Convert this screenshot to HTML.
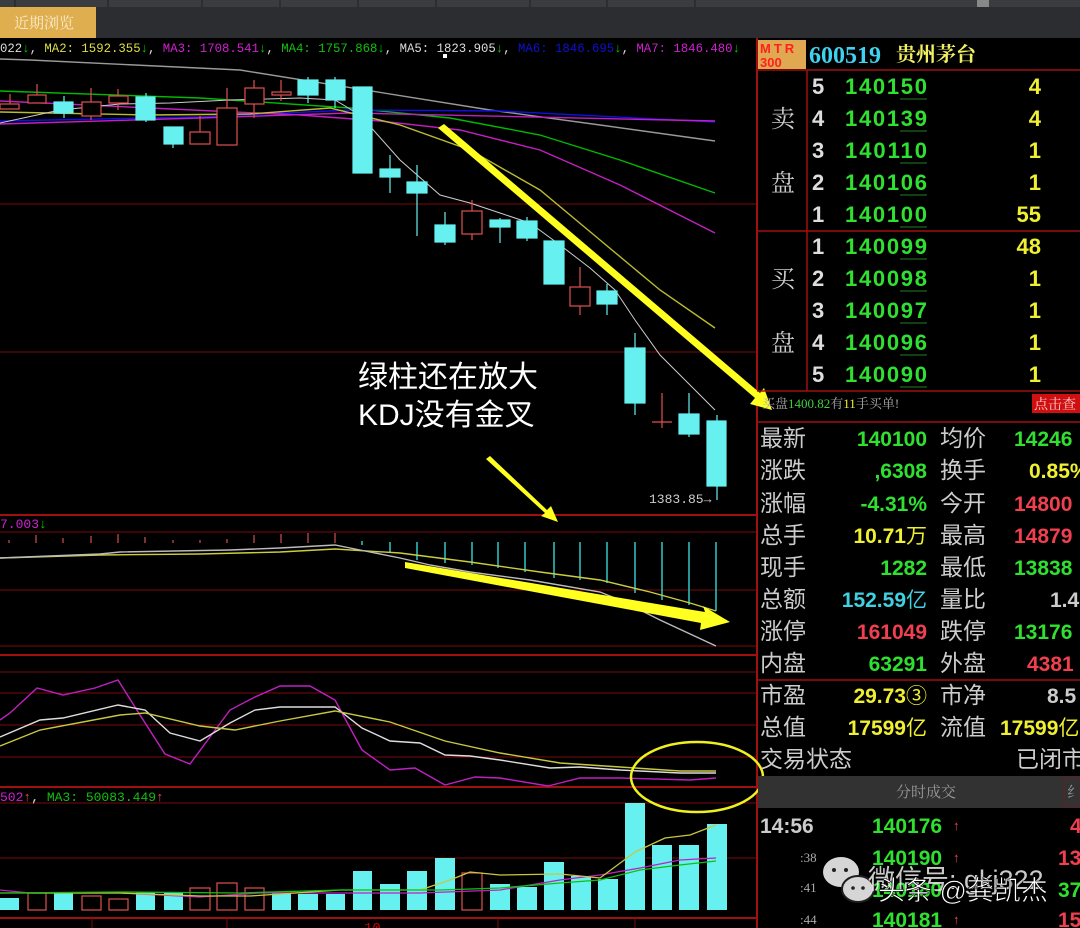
<!DOCTYPE html>
<html><head><meta charset="utf-8"><style>
html,body{margin:0;padding:0;background:#000;width:1080px;height:928px;overflow:hidden}
svg{display:block}
.c{font-family:"Liberation Sans","Noto Sans CJK SC",sans-serif}
.m{font-family:"Liberation Mono","Noto Sans CJK SC",monospace}
.s{font-family:"Liberation Serif","Noto Serif CJK SC",serif}
</style></head><body>
<svg width="1080" height="928" viewBox="0 0 1080 928" xmlns="http://www.w3.org/2000/svg">
<rect width="1080" height="928" fill="#000"/>
<rect x="0" y="0" width="1080" height="7" fill="#3a3c40"/>
<g stroke="#1e1f22" stroke-width="1"><line x1="15" y1="0" x2="15" y2="7"/><line x1="108" y1="0" x2="108" y2="7"/><line x1="202" y1="0" x2="202" y2="7"/><line x1="280" y1="0" x2="280" y2="7"/><line x1="358" y1="0" x2="358" y2="7"/><line x1="436" y1="0" x2="436" y2="7"/><line x1="530" y1="0" x2="530" y2="7"/><line x1="607" y1="0" x2="607" y2="7"/><line x1="695" y1="0" x2="695" y2="7"/></g>
<rect x="0" y="7" width="1080" height="31" fill="#2c2d30"/>
<rect x="0" y="7" width="96" height="31" fill="#dfae4e"/>
<text x="14" y="28" class="s" font-size="15" fill="#fbeccb">近期浏览</text>
<rect x="977" y="0" width="12" height="7" fill="#888"/>

<g stroke="#7a0a0a" stroke-width="1">
<line x1="0" y1="204" x2="757" y2="204"/><line x1="0" y1="352" x2="757" y2="352"/>
<line x1="0" y1="532" x2="757" y2="532"/><line x1="0" y1="590" x2="757" y2="590"/><line x1="0" y1="646" x2="757" y2="646"/>
<line x1="0" y1="672" x2="757" y2="672"/><line x1="0" y1="693" x2="757" y2="693"/><line x1="0" y1="725" x2="757" y2="725"/><line x1="0" y1="757" x2="757" y2="757"/>
<line x1="0" y1="803" x2="757" y2="803"/><line x1="0" y1="858" x2="757" y2="858"/>
</g>
<g stroke="#a01010" stroke-width="2">
<line x1="0" y1="515" x2="757" y2="515"/><line x1="0" y1="655" x2="757" y2="655"/><line x1="0" y1="787" x2="757" y2="787"/><line x1="0" y1="918" x2="757" y2="918"/>
<line x1="757" y1="38" x2="757" y2="928"/>
</g>
<g stroke="#7a0a0a"><line x1="92" y1="918" x2="92" y2="928"/><line x1="227" y1="918" x2="227" y2="928"/><line x1="498" y1="918" x2="498" y2="928"/><line x1="635" y1="918" x2="635" y2="928"/></g>
<text x="364" y="932" class="m" font-size="14" fill="#c00">10</text>

<text x="0" y="52" class="m" font-size="13" textLength="740" lengthAdjust="spacingAndGlyphs">
<tspan fill="#ddd">022</tspan><tspan fill="#0c0">↓</tspan><tspan fill="#ddd">, </tspan><tspan fill="#dddd44">MA2: 1592.355</tspan><tspan fill="#0c0">↓</tspan><tspan fill="#ddd">, </tspan><tspan fill="#d020d0">MA3: 1708.541</tspan><tspan fill="#0c0">↓</tspan><tspan fill="#ddd">, </tspan><tspan fill="#10c010">MA4: 1757.868</tspan><tspan fill="#0c0">↓</tspan><tspan fill="#ddd">, MA5: 1823.905</tspan><tspan fill="#0c0">↓</tspan><tspan fill="#ddd">, </tspan><tspan fill="#1010d0">MA6: 1846.695</tspan><tspan fill="#0c0">↓</tspan><tspan fill="#ddd">, </tspan><tspan fill="#d020d0">MA7: 1846.480</tspan><tspan fill="#0c0">↓</tspan>
</text>

<g fill="none" stroke-width="1.4">
<polyline stroke="#999" points="0,59 30,60 240,70 490,110 600,125 715,141"/>
<polyline stroke="#0b0" points="0,91 200,98 350,108 450,118 540,135 620,160 715,193"/>
<polyline stroke="#1010e0" points="0,121 200,117 350,110 500,111 715,122"/>
<polyline stroke="#c020c0" points="0,124 200,118 350,113 715,121"/>
<polyline stroke="#c020c0" points="0,101 150,108 300,115 380,121 460,130 540,150 620,185 715,233"/>
<polyline stroke="#bbbb30" points="0,112 150,115 250,114 330,108 400,125 470,150 540,190 600,240 660,290 715,328"/>
<polyline stroke="#ccc" stroke-width="1" points="0,123 60,110 120,104 170,103 230,100 300,98 335,100 360,115 400,160 440,195 470,203 500,213 530,223 560,245 590,268 615,290 635,320 660,355 700,395 715,410"/>
</g>

<g stroke-width="1.2">
<g stroke="#e05050" fill="#000">
<line x1="10" y1="94" x2="10" y2="104"/><rect x="0" y="104" width="19" height="5"/>
<line x1="37" y1="84" x2="37" y2="95"/><rect x="28" y="95" width="18" height="8"/>
<line x1="91" y1="88" x2="91" y2="102"/><line x1="91" y1="116" x2="91" y2="120"/><rect x="82" y="102" width="19" height="14"/>
<line x1="118" y1="89" x2="118" y2="110"/><rect x="109" y="96" width="19" height="7"/>
<line x1="200" y1="116" x2="200" y2="132"/><rect x="190" y="132" width="20" height="12"/>
<line x1="227" y1="88" x2="227" y2="108"/><rect x="217" y="108" width="20" height="37"/>
<line x1="254" y1="80" x2="254" y2="118"/><rect x="245" y="88" width="19" height="16"/>
<line x1="281" y1="80" x2="281" y2="101"/><rect x="272" y="92" width="19" height="3"/>
<line x1="472" y1="200" x2="472" y2="240"/><rect x="462" y="211" width="20" height="23"/>
<line x1="580" y1="267" x2="580" y2="315"/><rect x="570" y="287" width="20" height="19"/>
<line x1="662" y1="393" x2="662" y2="428"/><line x1="652" y1="422" x2="672" y2="422"/>
</g>
<g stroke="#66f0f0" fill="#66f0f0">
<line x1="64" y1="96" x2="64" y2="118"/><rect x="54" y="102" width="19" height="11"/>
<line x1="146" y1="93" x2="146" y2="122"/><rect x="136" y="97" width="19" height="23"/>
<line x1="173" y1="127" x2="173" y2="148"/><rect x="164" y="127" width="19" height="17"/>
<line x1="308" y1="77" x2="308" y2="103"/><rect x="298" y="80" width="20" height="15"/>
<line x1="335" y1="77" x2="335" y2="108"/><rect x="326" y="80" width="19" height="20"/>
<rect x="353" y="87" width="19" height="86"/>
<line x1="390" y1="155" x2="390" y2="193"/><rect x="380" y="169" width="20" height="8"/>
<line x1="417" y1="165" x2="417" y2="236"/><rect x="407" y="182" width="20" height="11"/>
<line x1="445" y1="212" x2="445" y2="245"/><rect x="435" y="225" width="20" height="17"/>
<line x1="500" y1="218" x2="500" y2="243"/><rect x="490" y="220" width="20" height="7"/>
<line x1="527" y1="217" x2="527" y2="241"/><rect x="517" y="221" width="20" height="17"/>
<rect x="544" y="241" width="20" height="43"/>
<line x1="607" y1="284" x2="607" y2="315"/><rect x="597" y="291" width="20" height="13"/>
<line x1="635" y1="333" x2="635" y2="415"/><rect x="625" y="348" width="20" height="55"/>
<line x1="689" y1="393" x2="689" y2="437"/><rect x="679" y="414" width="20" height="20"/>
<line x1="717" y1="415" x2="717" y2="500"/><rect x="707" y="421" width="19" height="65"/>
</g>
</g>
<text x="649" y="503" class="m" font-size="13" fill="#ccc">1383.85→</text>
<rect x="443" y="54" width="4" height="4" fill="#fff"/>

<text x="358" y="387" class="c" font-size="30" fill="#fff">绿柱还在放大</text>
<text x="358" y="425" class="c" font-size="30" fill="#fff">KDJ没有金叉</text>

<text x="0" y="528" class="m" font-size="13" fill="#d020d0">7.003<tspan fill="#0c0">↓</tspan></text>
<g stroke="#d05050" stroke-width="1.2">
<line x1="9" y1="540" x2="9" y2="543"/><line x1="36" y1="535" x2="36" y2="543"/><line x1="63" y1="538" x2="63" y2="543"/><line x1="91" y1="536" x2="91" y2="543"/><line x1="118" y1="534" x2="118" y2="543"/><line x1="145" y1="537" x2="145" y2="543"/><line x1="173" y1="540" x2="173" y2="543"/><line x1="200" y1="540" x2="200" y2="543"/><line x1="227" y1="539" x2="227" y2="543"/><line x1="254" y1="535" x2="254" y2="543"/><line x1="281" y1="534" x2="281" y2="543"/><line x1="308" y1="533" x2="308" y2="543"/><line x1="335" y1="533" x2="335" y2="543"/>
</g>
<g stroke="#30c8c8" stroke-width="1.5">
<line x1="362" y1="541" x2="362" y2="545"/><line x1="390" y1="542" x2="390" y2="553"/><line x1="417" y1="542" x2="417" y2="560"/><line x1="445" y1="542" x2="445" y2="563"/><line x1="472" y1="542" x2="472" y2="565"/><line x1="498" y1="542" x2="498" y2="568"/><line x1="525" y1="542" x2="525" y2="572"/><line x1="554" y1="542" x2="554" y2="578"/><line x1="580" y1="542" x2="580" y2="580"/><line x1="607" y1="542" x2="607" y2="583"/><line x1="635" y1="542" x2="635" y2="593"/><line x1="662" y1="542" x2="662" y2="600"/><line x1="689" y1="542" x2="689" y2="605"/><line x1="716" y1="542" x2="716" y2="611"/>
</g>
<g fill="none" stroke-width="1.4">
<polyline stroke="#cccc40" points="0,558 100,555 200,554 280,552 335,549 400,553 470,562 540,572 600,580 650,592 690,603 716,611"/>
<polyline stroke="#bbb" points="0,558 100,554 120,552 230,550 280,548 335,545 360,550 400,558 430,565 470,572 530,580 600,592 620,600 660,620 716,646"/>
</g>
<polygon fill="#ffff20" points="405,562 705,612 703,606 730,622 700,630 701,623 405,568"/>

<g fill="none" stroke-width="1.4">
<polyline stroke="#c020c0" points="0,720 10,713 37,688 63,695 95,688 118,680 140,715 165,754 190,764 230,710 255,697 280,686 310,686 335,700 362,750 390,770 415,768 445,785 475,777 500,778 548,786 560,783 580,778 620,778 690,780 716,778"/>
<polyline stroke="#ddd" points="0,737 40,720 63,718 118,705 145,710 170,733 200,741 230,723 255,710 280,707 300,707 335,707 362,728 390,741 420,743 445,755 470,756 500,760 550,768 580,767 620,770 680,773 716,773"/>
<polyline stroke="#c8c840" points="0,746 40,730 120,715 145,713 200,726 235,730 280,721 335,711 390,722 445,741 500,753 560,763 620,767 680,771 716,771"/>
</g>
<ellipse cx="697" cy="777" rx="66" ry="35" fill="none" stroke="#f0f020" stroke-width="2.5"/>

<text x="0" y="801" class="m" font-size="13"><tspan fill="#d020d0">502</tspan><tspan fill="#e05050">↑</tspan><tspan fill="#ddd">, </tspan><tspan fill="#10c010">MA3: 50083.449</tspan><tspan fill="#e05050">↑</tspan></text>
<g fill="#66f0f0">
<rect x="0" y="898" width="19" height="12"/><rect x="54" y="893" width="19" height="17"/><rect x="136" y="892" width="19" height="18"/><rect x="164" y="893" width="19" height="17"/><rect x="272" y="893" width="19" height="17"/><rect x="298" y="894" width="20" height="16"/><rect x="326" y="894" width="19" height="16"/><rect x="353" y="871" width="19" height="39"/><rect x="380" y="884" width="20" height="26"/><rect x="407" y="871" width="20" height="39"/><rect x="435" y="858" width="20" height="52"/><rect x="490" y="884" width="20" height="26"/><rect x="517" y="887" width="20" height="23"/><rect x="544" y="862" width="20" height="48"/><rect x="571" y="876" width="20" height="34"/><rect x="598" y="879" width="20" height="31"/><rect x="625" y="803" width="20" height="107"/><rect x="652" y="845" width="20" height="65"/><rect x="679" y="845" width="20" height="65"/><rect x="707" y="824" width="20" height="86"/>
</g>
<g fill="#000" stroke="#e05050" stroke-width="1.2">
<rect x="28" y="893" width="18" height="17"/><rect x="82" y="896" width="19" height="14"/><rect x="109" y="899" width="19" height="11"/><rect x="190" y="888" width="20" height="22"/><rect x="217" y="883" width="20" height="27"/><rect x="245" y="888" width="19" height="22"/><rect x="462" y="873" width="20" height="37"/>
</g>
<g fill="none" stroke-width="1.3">
<polyline stroke="#c020c0" points="0,890 30,893 120,893 200,897 260,893 340,893 420,893 500,890 560,880 600,875 640,868 680,860 716,858"/>
<polyline stroke="#c8c840" points="0,893 120,893 200,896 250,896 340,890 420,890 450,880 470,872 500,875 560,874 600,878 635,852 665,838 690,835 716,825"/>
<polyline stroke="#10c010" points="0,893 120,892 240,893 340,890 440,890 500,888 560,883 600,880 640,870 680,865 716,861"/>
</g>

<polygon fill="#ffff20" points="438,128 444,124 760,393 764,388 772,410 750,404 755,398"/>
<polygon fill="#ffff20" points="486,459 490,456 547,510 551,506 558,522 541,516 545,513"/>

<g stroke="#a01010" stroke-width="1.5">
<line x1="757" y1="70" x2="1080" y2="70"/><line x1="757" y1="231" x2="1080" y2="231"/><line x1="757" y1="391" x2="1080" y2="391"/><line x1="757" y1="422" x2="1080" y2="422"/><line x1="757" y1="680" x2="1080" y2="680"/>
<line x1="807" y1="70" x2="807" y2="391"/>
</g>
<rect x="758" y="40" width="48" height="29" fill="#e0a850"/>
<text x="760" y="53" class="c" font-size="13" font-weight="bold" fill="#ff2020" letter-spacing="3">MTR</text>
<text x="760" y="67" class="c" font-size="13" font-weight="bold" fill="#ff2020">300</text>
<text x="809" y="63" class="s" font-size="24" font-weight="bold" fill="#40d0f0">600519</text>
<text x="896" y="61" class="s" font-size="20" font-weight="bold" fill="#f0f060">贵州茅台</text>

<g class="s" font-size="24" fill="#ccc">
<text x="771" y="127">卖</text><text x="771" y="191">盘</text>
<text x="771" y="287">买</text><text x="771" y="351">盘</text>
</g>
<g class="c" font-size="22" font-weight="bold">
<g fill="#ddd">
<text x="812" y="94">5</text><text x="812" y="126">4</text><text x="812" y="158">3</text><text x="812" y="190">2</text><text x="812" y="222">1</text>
<text x="812" y="254">1</text><text x="812" y="286">2</text><text x="812" y="318">3</text><text x="812" y="350">4</text><text x="812" y="382">5</text>
</g>
<g fill="#30e030">
<text x="845" y="94" textLength="82">140150</text><text x="845" y="126" textLength="82">140139</text><text x="845" y="158" textLength="82">140110</text><text x="845" y="190" textLength="82">140106</text><text x="845" y="222" textLength="82">140100</text>
<text x="845" y="254" textLength="82">140099</text><text x="845" y="286" textLength="82">140098</text><text x="845" y="318" textLength="82">140097</text><text x="845" y="350" textLength="82">140096</text><text x="845" y="382" textLength="82">140090</text>
</g>
<g fill="#f0f030" text-anchor="end">
<text x="1041" y="94">4</text><text x="1041" y="126">4</text><text x="1041" y="158">1</text><text x="1041" y="190">1</text><text x="1041" y="222">55</text>
<text x="1041" y="254">48</text><text x="1041" y="286">1</text><text x="1041" y="318">1</text><text x="1041" y="350">1</text><text x="1041" y="382">1</text>
</g>
</g>
<g stroke="#208020" stroke-width="1"><line x1="900" y1="99" x2="927" y2="99"/><line x1="900" y1="131" x2="927" y2="131"/><line x1="900" y1="163" x2="927" y2="163"/><line x1="900" y1="195" x2="927" y2="195"/><line x1="900" y1="227" x2="927" y2="227"/><line x1="900" y1="259" x2="927" y2="259"/><line x1="900" y1="291" x2="927" y2="291"/><line x1="900" y1="323" x2="927" y2="323"/><line x1="900" y1="355" x2="927" y2="355"/><line x1="900" y1="387" x2="927" y2="387"/></g>

<text x="762" y="408" class="s" font-size="13" fill="#aaa">买盘<tspan fill="#40d040">1400.82</tspan>有<tspan fill="#f0f030">11</tspan>手买单!</text>
<rect x="1032" y="394" width="48" height="19" fill="#d01010"/>
<text x="1034" y="409" class="s" font-size="14" fill="#fcc">点击查</text>

<g class="c" font-size="23" fill="#ccc">
<text x="760" y="446">最新</text><text x="760" y="478">涨跌</text><text x="760" y="511">涨幅</text><text x="760" y="543">总手</text><text x="760" y="575">现手</text><text x="760" y="607">总额</text><text x="760" y="639">涨停</text><text x="760" y="671">内盘</text>
<text x="760" y="703">市盈</text><text x="760" y="735">总值</text><text x="760" y="767">交易状态</text>
<text x="940" y="446">均价</text><text x="940" y="478">换手</text><text x="940" y="511">今开</text><text x="940" y="543">最高</text><text x="940" y="575">最低</text><text x="940" y="607">量比</text><text x="940" y="639">跌停</text><text x="940" y="671">外盘</text>
<text x="940" y="703">市净</text><text x="940" y="735">流值</text><text x="1016" y="767">已闭市</text>
</g>
<g class="c" font-size="21" font-weight="bold" text-anchor="end">
<text x="927" y="446" fill="#30e030">140100</text>
<text x="927" y="478" fill="#30e030">,6308</text>
<text x="927" y="511" fill="#30e030">-4.31%</text>
<text x="927" y="543" fill="#f0f030">10.71<tspan font-weight="normal">万</tspan></text>
<text x="927" y="575" fill="#30e030">1282</text>
<text x="927" y="607" fill="#40d0e0">152.59<tspan font-weight="normal">亿</tspan></text>
<text x="927" y="639" fill="#f04050">161049</text>
<text x="927" y="671" fill="#30e030">63291</text>
<text x="927" y="703" fill="#f0f030">29.73<tspan font-weight="normal">③</tspan></text>
<text x="927" y="735" fill="#f0f030">17599<tspan font-weight="normal">亿</tspan></text>
</g>
<g class="c" font-size="21" font-weight="bold">
<text x="1014" y="446" fill="#30e030">14246</text>
<text x="1029" y="478" fill="#f0f030">0.85%</text>
<text x="1014" y="511" fill="#f04050">14800</text>
<text x="1014" y="543" fill="#f04050">14879</text>
<text x="1014" y="575" fill="#30e030">13838</text>
<text x="1050" y="607" fill="#ccc">1.4</text>
<text x="1014" y="639" fill="#30e030">13176</text>
<text x="1027" y="671" fill="#f04050">4381</text>
<text x="1047" y="703" fill="#ccc">8.5</text>
<text x="1000" y="735" fill="#f0f030">17599<tspan font-weight="normal">亿</tspan></text>
</g>

<rect x="758" y="776" width="322" height="32" fill="#323232"/>
<text x="896" y="797" class="s" font-size="15" fill="#999">分时成交</text>
<rect x="1064" y="778" width="16" height="28" fill="none" stroke="#602020"/>
<text x="1067" y="797" class="s" font-size="15" fill="#999">纟</text>

<g class="c" font-weight="bold">
<text x="760" y="833" font-size="21" fill="#ccc">14:56</text>
<text x="872" y="833" font-size="21" fill="#30e030">140176</text><text x="953" y="830" font-size="13" fill="#f04050">↑</text><text x="1070" y="833" font-size="21" fill="#f04050">4</text>
<text x="872" y="865" font-size="21" fill="#30e030">140190</text><text x="953" y="862" font-size="13" fill="#f04050">↑</text><text x="1058" y="865" font-size="21" fill="#f04050">13</text>
<text x="872" y="897" font-size="21" fill="#30e030">140180</text><text x="1058" y="897" font-size="21" fill="#30e030">37</text>
<text x="872" y="927" font-size="21" fill="#30e030">140181</text><text x="953" y="924" font-size="13" fill="#f04050">↑</text><text x="1058" y="927" font-size="21" fill="#f04050">15</text>
</g>
<g class="s" font-size="13" fill="#aaa"><text x="800" y="862">:38</text><text x="800" y="892">:41</text><text x="800" y="924">:44</text></g>
<g fill="#eee" opacity="0.9">
<ellipse cx="841" cy="872" rx="18" ry="15"/><ellipse cx="858" cy="889" rx="16" ry="13" stroke="#222" stroke-width="2"/>
</g>
<g fill="#222"><circle cx="834" cy="870" r="2"/><circle cx="846" cy="870" r="2"/><circle cx="853" cy="888" r="1.8"/><circle cx="863" cy="888" r="1.8"/></g>
<text x="868" y="889" class="c" font-size="27" fill="#eee" opacity="0.85">微信号: gkj322</text>
<text x="878" y="900" class="c" font-size="27" fill="#fff" stroke="#000" stroke-width="0.6">头条 @龚凯杰</text>
</svg>
</body></html>
